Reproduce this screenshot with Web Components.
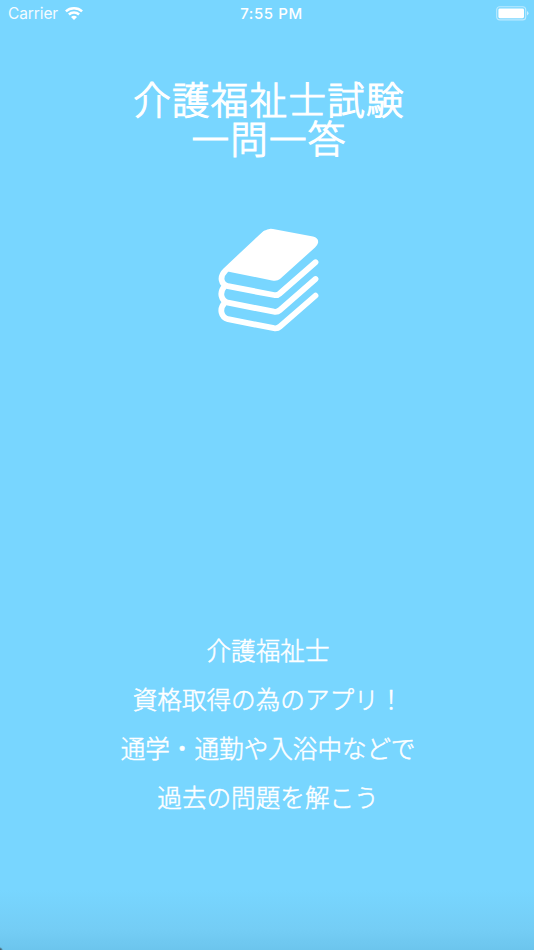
<!DOCTYPE html>
<html lang="ja"><head><meta charset="utf-8"><title>介護福祉士試験 一問一答</title>
<style>html,body{margin:0;height:100%;overflow:hidden}</style></head>
<body><splash-screen></splash-screen>
<script>
const define=(name,html)=>customElements.define(name,class extends HTMLElement{
  constructor(){super();this.attachShadow({mode:'open'}).innerHTML=html;}
});
define('wifi-icon',`<style>:host{display:block;width:18px;height:13px}svg{display:block}</style>
<svg width="18" height="13" viewBox="0 0 18 13" fill="none" stroke="#fff" stroke-width="2.5"><path d="M.9 4.4C5.3.2 12.7.2 17.1 4.4M3.9 7.5c2.8-2.7 7.4-2.7 10.2 0"/><path d="M6 10c1.7-1.6 4.3-1.6 6 0L9 12.9z" fill="#fff" stroke="none"/></svg>`);
define('battery-icon',`<style>:host{display:block;width:33px;height:15px}svg{display:block}</style>
<svg width="33" height="15" viewBox="0 0 33 15"><rect x=".7" y=".7" width="29" height="13.2" rx="3" fill="none" stroke="#fff" stroke-opacity=".5" stroke-width="1.1"/><rect x="2.4" y="2.4" width="25.6" height="9.8" rx="1.4" fill="#fff"/><path d="M31 5.1q1.5.7 1.5 2.2T31 9.5z" fill="#fff" fill-opacity=".6"/></svg>`);
define('status-bar',`<style>:host{display:grid;grid-template-columns:1fr auto 1fr;align-items:center;height:28px;padding:0 5px 0 8px;font:400 15.5px/28px Inter,"Liberation Sans",sans-serif;color:#fff}
.left{display:flex;align-items:center;gap:7px}.left span{opacity:.92;letter-spacing:-.1px}.time{font-weight:500;font-size:15px;letter-spacing:.6px;padding-left:6px}.right{justify-self:end}wifi-icon,battery-icon{margin-top:-1px}</style>
<div class="left"><span>Carrier</span><wifi-icon></wifi-icon></div><div class="time">7:55 PM</div><battery-icon class="right"></battery-icon>`);
define('app-title',`<style>:host{display:block;text-align:center;font-weight:300;font-size:37.6px;letter-spacing:1.2px;line-height:39px;-webkit-text-stroke:1.1px #fff;stroke-linejoin:round}</style><slot></slot>`);
define('book-stack',`<style>:host{display:block;width:120px;height:120px}svg{display:block}</style>
<svg width="120" height="120" viewBox="0 0 120 120" fill="none" stroke="#fff" stroke-width="5.8" stroke-linecap="round" stroke-linejoin="round">
<path d="M54 11.3Q58 8 63 9L103 16.5Q109 18 108 23Q107.5 25 105 27.5L70 59Q67 61.6 62 60.5L20 52Q15 51 17 47z" fill="#fff" stroke="none"/>
<path d="M55 13.5L15.5 50.5C9 57 11 64.5 18 66.2L64 75Q67.5 75.7 70 73.3L105.5 42.2"/>
<path d="M14.5 66.3C9 72.5 11 81 18 82.7L64 91.7Q67.5 92.3 70 90L105.5 59"/>
<path d="M14.5 83C9 89 11 97.4 18 99.2L64 108.2Q67.5 108.8 70 106.5L105.5 75.6"/></svg>`);
define('app-message',`<style>:host{display:block;text-align:center;font-weight:300;font-size:24.6px;line-height:49px;white-space:nowrap;-webkit-text-stroke:.5px #fff}</style><slot></slot>`);
define('splash-screen',`<style>:host{display:flex;flex-direction:column;align-items:center;box-sizing:border-box;height:100vh;color:#fff;font-family:"Noto Sans CJK JP",sans-serif;background:radial-gradient(circle at 0 100%,#47616f 0 1px,transparent 3px),linear-gradient(#78d6ff 0,#78d6ff 890px,#74cdf5 930px,#6cc5ed 950px)}
status-bar{width:100%;box-sizing:border-box}app-title{margin-top:50px;padding-left:4px}book-stack{margin:64px 0 0 6px}app-message{margin-top:285px;padding-left:2px}</style>
<status-bar></status-bar><app-title>介護福祉士試験<br>一問一答</app-title><book-stack></book-stack>
<app-message>介護福祉士<br>資格取得の為のアプリ！<br>通学・通勤や入浴中などで<br>過去の問題を解こう</app-message>`);
</script></body></html>
